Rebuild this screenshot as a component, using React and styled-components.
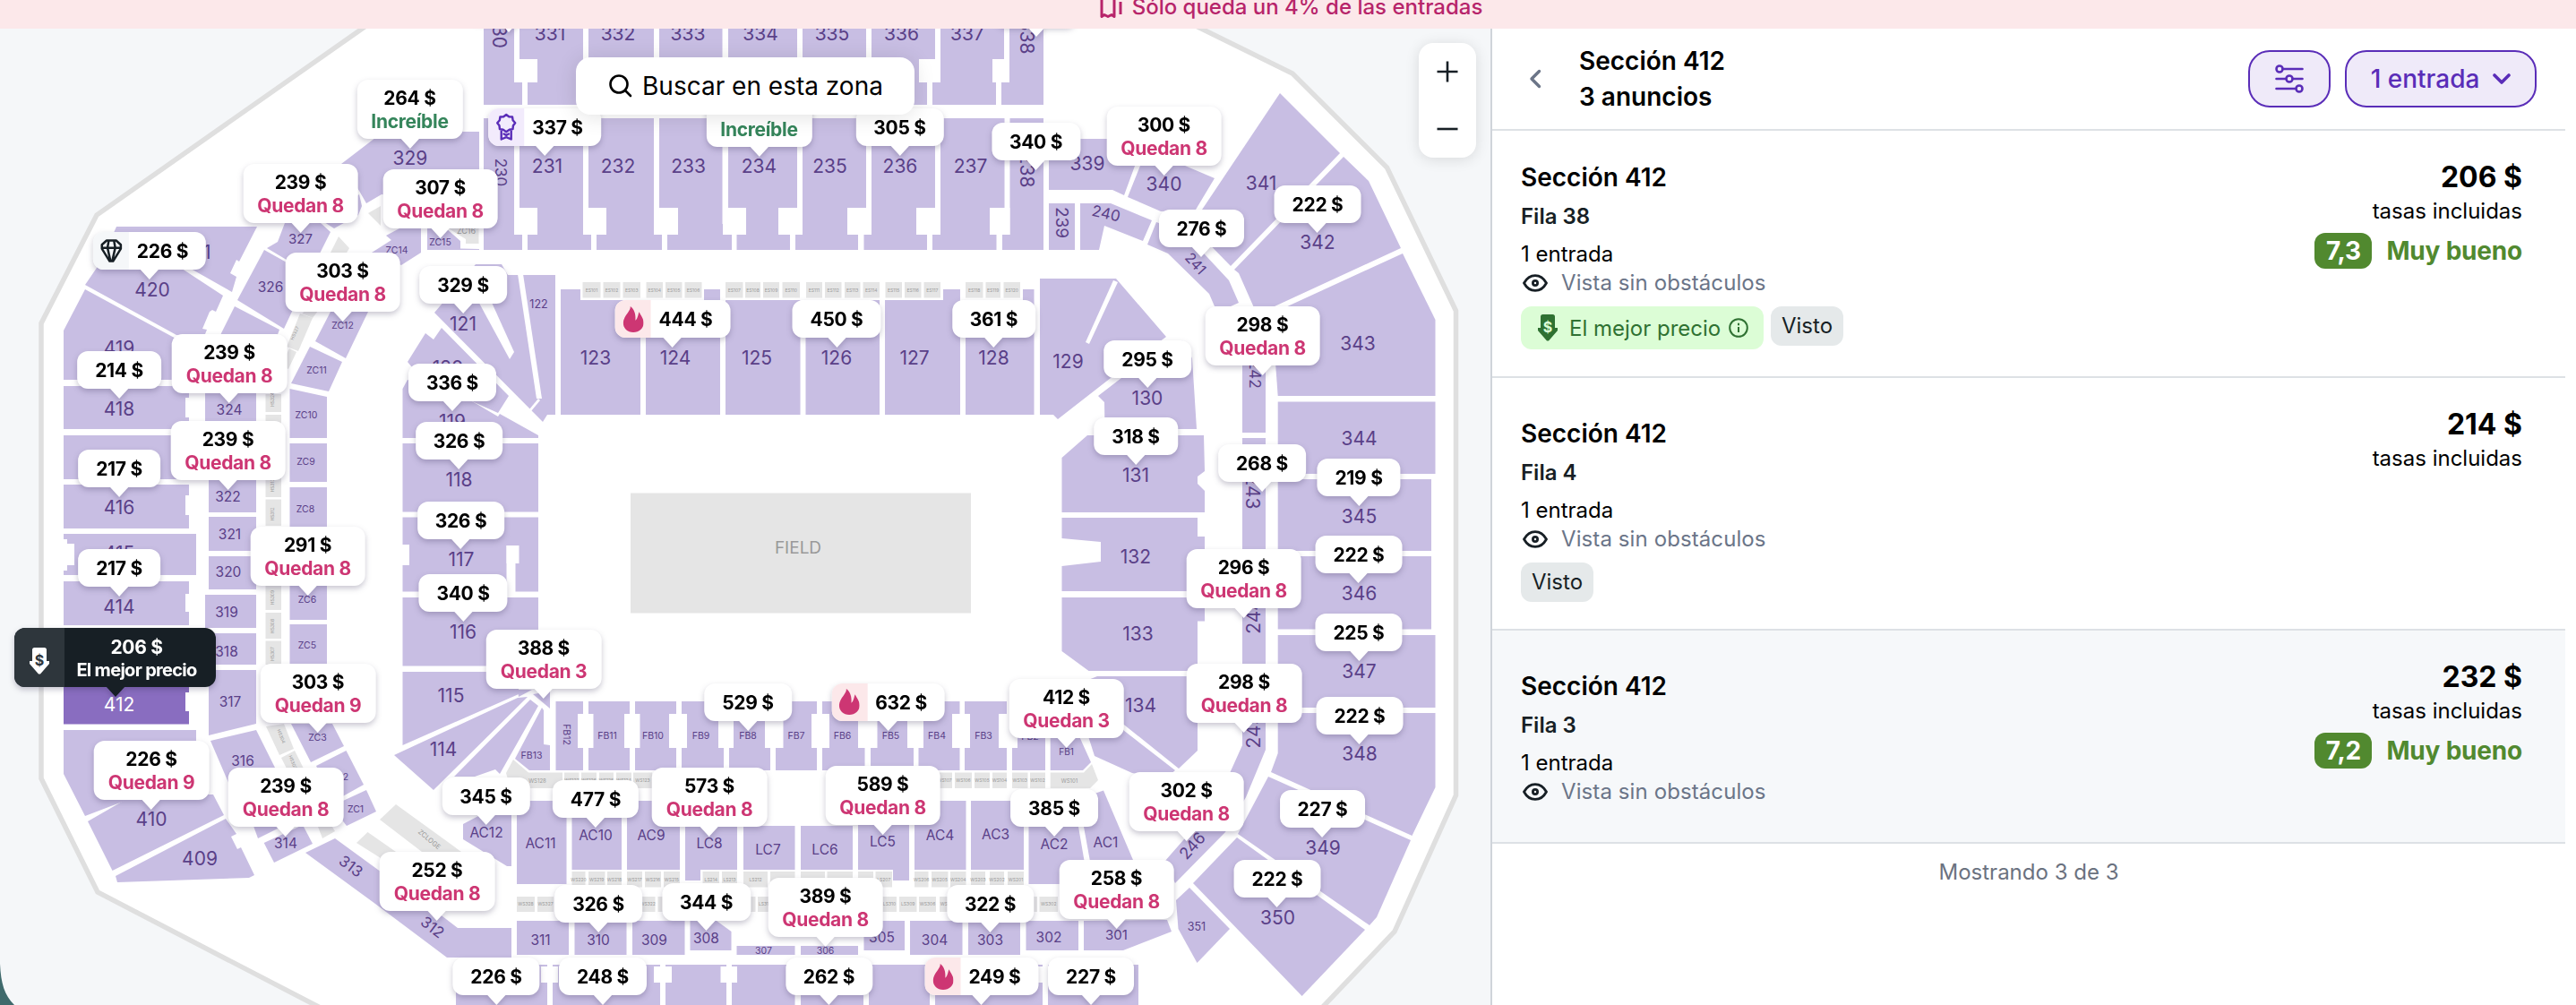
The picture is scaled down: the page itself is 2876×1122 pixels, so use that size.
import React from 'react'
import styled, { createGlobalStyle, css } from 'styled-components'

const colors = {
  section: '#c8bee3',
  selected: '#896dc0',
  label: '#5a4088',
  closed: '#e5e5e5',
  brand: '#5a2db8',
  pink: '#cd3673',
  dark: '#171f25',
  muted: '#6b7588',
}

const GlobalStyle = createGlobalStyle`
  * { box-sizing: border-box; }
  body {
    margin: 0;
    background: #fff;
    color: #000;
    font-family: Inter, "Liberation Sans", sans-serif;
  }
`

const box = (x1, y1, x2, y2) => `${x1},${y1} ${x2},${y1} ${x2},${y2} ${x1},${y2}`

const sections = [
  // 400s
  '130,253 287,253 267,292 264,290 257,305 264,309 259,326 160,270 116,285',
  '108,299 112,290 165,275 249,330 241,348 237,346 234,348 226,367 231,368 229,373 197,374 95,318',
  '95,323 200,380 211,380 211,424 71,424 71,369',
  box(71, 431, 211, 479),
  box(71, 486, 219, 535),
  box(71, 541, 211, 590),
  box(71, 596, 219, 642),
  box(71, 649, 211, 698),
  '71,815 219,815 219,875 150,890 95,911 71,864',
  '98,917 150,887 238,887 250,910 125.5,972',
  '129,978 252,914 264,931 258,934 265,948 269,946 284,977 278,980 131,985',
  // 300s, left side
  '381,183 428,147 535,147 535,230 426,217 409,227 401,213',
  '362,248 373,255 400,240 404,230 401,217 390,225',
  '310,270 318,249 358,249 369,259 356,285 340,302 298,277',
  '295,279 345,307 317,367 265,335',
  '262,342 312,368 288,432 228,420 247,372',
  box(229, 436, 286, 470),
  box(233, 476, 286, 519),
  box(233, 525, 286, 572),
  box(233, 577, 286, 615),
  box(233, 621, 286, 658),
  box(229, 664, 286, 701),
  box(229, 707, 286, 742),
  '233,748 286,748 286,808 233,821',
  '235,827 286,815 307,857 307,890 262,890',
  '275,900 330,900 312,924 288,936',
  '294.7,941 338,921 349,942 306,963',
  '374,936 422,971 494,1023 511,1036 571,1036 571,1069 499,1069 419,1009 341,952',
  // zone club
  '477,255 498,255 514,269 514,277.5 535,278 535,279 477,279',
  '415,282 437,268 431,263 446,255 470,255 470,282 448,296',
  '369,348 411,348 386,400 352,381',
  '346,387 382,404 367,437 325,428',
  '323.5,434 365,443 365,489 323.5,489',
  box(323.5, 495, 365, 538),
  box(323.5, 544, 365, 588),
  box(323.5, 594, 365, 645),
  box(323.5, 651, 365, 692),
  box(323.5, 697, 365, 741.5),
  '325,808 371,808 384,833 347,851',
  '353,855 386.5,838 406,876 372,895',
  '370,900 409,882 420,906 387,922',
  // 100s, left side
  '531,295 560,295 567,307 620,307 620,463 611,463 606,471 485,349',
  '455,404 475,372 484,379 493,366 568,442 556,461 527,448 460,410',
  '449.5,434 455,424 527,448 556,465 558,462 601,486 601,489 449.5,489',
  box(449.5, 495, 601, 571.5),
  box(449.5, 577.5, 601, 660.5),
  box(449.5, 667, 601, 743.5),
  '449.5,750 601,750 579,769 579,775 449.5,832',
  '440,843 578,779 589,778 484,882',
  '592,781 601,788 558,864 553,859 530,867 507,867',
  '607,793 607,831 614,832 614,860 591,860 575,847 605,790',
  '595,775 614,772 614,791',
  '578,770 594,770 579,778',
  // 330s and 230s
  '540,30 574,30 574,92 583,92 583,117 540,117',
  box(580, 30, 651, 92), box(589, 80, 660, 117),
  box(657, 30, 730, 92), box(666, 80, 739, 117),
  box(736, 30, 806.5, 92), box(745, 80, 817, 117),
  box(813, 30, 890, 92), box(822.5, 80, 882, 117),
  box(896, 30, 967, 92), box(888, 80, 958, 117),
  box(973, 30, 1044, 92), box(964.5, 80, 1035, 117),
  box(1050, 30, 1121, 92), box(1041, 80, 1112, 117),
  box(1127, 30, 1165, 92), box(1118, 92, 1165, 117),
  '540,132 574,132 574,262 583,262 583,279 540,279',
  box(580, 132, 651, 262), box(589, 250, 660, 279),
  box(657, 132, 730, 262), box(666, 250, 739, 279),
  box(736, 132, 806.5, 262), box(745, 250, 817, 279),
  box(813, 132, 890, 262), box(822.5, 250, 882, 279),
  box(896, 132, 967, 262), box(888, 250, 958, 279),
  box(973, 132, 1044, 262), box(964.5, 250, 1035, 279),
  box(1050, 132, 1121.5, 262), box(1041, 250, 1112.5, 279),
  box(1127.5, 132, 1165, 262), box(1119, 262, 1165, 279),
  // 120s
  box(626, 323, 715, 463),
  box(721, 323, 804, 463),
  box(810, 323, 893.5, 463),
  box(899.5, 323, 982, 463),
  box(988, 323, 1072, 463),
  box(1078, 323, 1154.5, 463),
  '1161,311 1246,311 1302,376 1240,422 1181,468 1176,463 1161,463',
  '1226,442 1252,422 1320,380 1331,400 1336,479 1233.5,479 1233,449',
  '1214,486 1344,486 1345,526 1337,532 1337,540 1345,548 1345,572 1185.5,572 1185.5,511',
  '1185.5,578 1337,578 1337,599 1345,599 1345,660 1185.5,660 1185.5,632 1229,627 1229,605 1185.5,601',
  '1185.5,667 1345,667 1345,693.5 1337,693.5 1337,749 1215.5,749 1185.5,727',
  '1225,755 1337,755 1337,838 1316,858 1200,765',
  '1200,775 1254,815 1312,860 1300,870 1264,863 1222,844',
  // 340s
  '1171,155 1278,155 1255,218 1242,212 1171,212',
  '1273,185 1323,185 1356,199 1335,234 1296,236 1259,220',
  '1429,104 1496,171 1374,297 1330,252',
  '1500,175 1528,202 1564,277 1423,342 1402,348 1383,305 1378,301',
  '1566,283 1602.5,357 1602.5,442 1426.7,442 1420,350',
  box(1426.7, 448.5, 1602.5, 529),
  box(1426.7, 535, 1598, 615),
  box(1426.7, 621, 1598, 702.5),
  box(1426.7, 709, 1602.5, 790),
  '1426.7,796 1602.5,796 1602.5,879 1576.5,933 1419,862 1426.7,841',
  '1416,867 1575,938 1537,1024 1529,1033 1382,931',
  '1381,935 1524,1038 1453.6,1112 1332,986',
  '1328,991 1373,1037 1336.5,1075 1315.5,1037 1313,1005',
  // ring
  box(1171, 227, 1200, 279),
  '1206,227 1240,227 1286,246 1276,269 1233,252 1227,279 1206,279',
  '1291,248 1320,258 1345,284 1372,313 1383,338 1374,342 1356,342 1350,328 1304,283 1281,273',
  box(1387, 350, 1413, 483),
  '1387,489 1413,489 1413,837 1391,890 1368,929 1312,986 1300,962 1350,905 1373.5,862 1387,832',
  // field boxes
  box(620.5, 783, 651, 860),
  box(657, 783, 703, 860),
  box(709, 783, 755, 860),
  box(761, 783, 808, 860),
  box(814, 783, 860, 860),
  box(866, 783, 912, 860),
  box(918, 783, 965.5, 860),
  box(972, 783, 1020, 860),
  box(1025.5, 783, 1071.5, 860),
  box(1077, 783, 1124, 860),
  box(1130, 783, 1167, 860),
  '1172.7,800 1195,800 1218,851 1209,860 1172.7,860',
  // all inclusive clubs
  '517,920 536,910 571,910 571,967 566,967 517,937',
  box(577, 894, 632.5, 987),
  box(638.5, 894, 694, 971),
  box(700, 894, 759, 971),
  '765,894 823,894 823,971 782,971 782,983 765,983',
  box(830, 922, 887.5, 971),
  box(894, 922, 952, 971),
  '958,894 1015,894 1015,983 997,983 997,971 958,971',
  box(1021, 894, 1078.5, 971),
  box(1084, 894, 1143, 971),
  '1148.5,894 1200,894 1204,923 1215,987 1148.5,987',
  '1205,892 1232,882.5 1282,1000 1224,1000 1210,923',
  // lower 300s
  box(577, 1028, 635, 1066),
  box(641.5, 1028, 699.5, 1066),
  box(706, 1028, 764.5, 1066),
  '770.5,1028 800,1028 816.5,1040 816.5,1061 770.5,1061',
  box(822.5, 1056, 887.5, 1066),
  box(894, 1056, 958, 1066),
  box(964.5, 1028, 1010, 1061),
  box(1016, 1028, 1074.5, 1066),
  box(1081, 1028, 1139, 1066),
  box(1145.5, 1028, 1204, 1061),
  '1210,1028 1303,1027 1308,1040 1254,1061 1210,1061',
  // bottom row
  box(509, 1077, 611, 1130),
  box(617, 1077, 737, 1130),
  box(743, 1077, 811, 1130),
  box(817, 1077, 887.5, 1130),
  box(894, 1077, 964, 1130),
  box(970, 1077, 1038, 1130),
  box(1044, 1077, 1164, 1130),
  box(1170, 1077, 1271, 1130),
]

// stairs and vomitories, painted over the sections
const gaps = [
  box(207, 444, 212, 466), box(207, 553, 212, 575), box(207, 663, 212, 683),
  box(71, 602, 75, 637), box(75, 607, 83, 631),
  '525,320 541,320 574,393 569,401',
  '578,306 584,306 605,445 599,445',
  '601,445 603,447 593,459 591,457',
  box(449, 608, 457, 631), box(565.5, 609, 579.5, 629), box(565.5, 609, 575.5, 661),
  '1243,313 1248,315 1216,384 1212,382',
  box(574, 66, 600, 92), box(1026, 66, 1050, 92), box(1108, 66, 1127, 92),
  box(574, 232, 600, 262), box(651, 232, 677, 262), box(730, 232, 757, 262),
  box(807, 232, 833, 262), box(869, 232, 896, 262), box(946, 232, 973, 262),
  box(1023, 232, 1050, 262), box(1105, 232, 1127.5, 262),
  box(648, 313, 786, 335), box(810, 313, 1053, 335), box(1078, 313, 1142, 335),
  box(645, 797, 662.5, 835), box(697, 797, 714.5, 835), box(747, 797, 767, 835),
  box(802, 797, 819, 835), box(854, 797, 874.5, 835), box(906, 797, 926, 835),
  box(958, 797, 979.5, 835), box(1013, 797, 1031, 835), box(1063, 797, 1083, 835),
  box(1115, 797, 1136, 835),
  box(604, 1079, 623, 1097), box(730, 1079, 750, 1097), box(804.5, 1079, 823, 1097),
  box(1157, 1079, 1176, 1097),
]

const closed = [
  '335,350 349,355 333,392 320,387',
  '323,389 331,393 322,412 314,408',
  '337,350 350,340 355,347 349,355',
  box(296.5, 440, 314, 460), box(296.5, 463, 314, 480), box(296.5, 530, 314, 555),
  box(296.5, 557.5, 314, 587), box(296.5, 653, 314, 681), box(296.5, 684, 314, 713),
  box(296.5, 715.5, 314, 742),
  '297,811 317,808 328,836 312,843',
  '314,846 329,838 339,858 320,858',
  '352,915 366,915 374,928 360,936',
  '411,238 425,230 425,252',
  '378,264 390,277 386,284 368,284',
  '501,255 534.5,255 534.5,272 520,272 520,267',
  '442,898 515,951 471,951 424,915',
  '410.5,929 442,951 425,958 398,941',
  '573,848 590,862.5 628,862.5 628,880 570,880 565,863',
  '1172.7,862.5 1210,862.5 1219,853 1226,871 1217,880 1172.7,880',
]

const boxRow = (y, h, prefix, list) =>
  list.map(([x1, x2, n]) => ({ x: x1, y, w: x2 - x1, h, label: n ? prefix + n : '' }))

const closedBoxes = [
  ...boxRow(315, 17.5, 'ES', [
    [650.5, 670.5, 101], [673.5, 692.5, 102], [695.5, 715, 103], [721.5, 740, 104],
    [743, 761.5, 105], [764.5, 783.5, 106], [810, 829.5, 107], [832, 849, 108],
    [852, 870, 109], [873.5, 893, 110], [900, 918, 111], [921, 939.5, 112],
    [943, 960.5, 113], [963.5, 982, 114], [988.5, 1007, 115], [1010, 1028.5, 116],
    [1031.5, 1050, 117], [1078, 1097.5, 118], [1100.5, 1117, 119], [1120.5, 1139, 120],
  ]),
  ...boxRow(862.5, 17.5, 'WS', [
    [630, 646.5, 127], [649, 666, 126], [669, 685, 125], [688, 705, 124], [707, 728, 123],
    [1046, 1063, 107], [1066, 1085, 106], [1088, 1105, 105], [1108, 1124, 104],
    [1130, 1147.5, 103], [1150, 1167, 102],
  ]),
  ...boxRow(973, 17.5, 'WS', [
    [638.5, 653.5, 220], [657, 675.5, 219], [678, 694, 218], [700, 717, 217],
    [720, 738, 216], [741, 759, 215], [1021, 1036.5, 206], [1040, 1058.5, 205],
    [1061, 1078.5, 204], [1084, 1100, 203], [1105, 1121, 202], [1125, 1143, 201],
  ]),
  ...boxRow(973, 17.5, 'LS', [
    [784.5, 803, 214], [806, 823, 213], [830, 857, 212], [860, 887.5], [894, 921],
    [923.5, 952], [958, 975], [977.5, 996, 207],
  ]),
  ...boxRow(1001, 17, 'WS', [
    [577, 597, 328], [600, 618, 327], [715, 731.5, 322], [734.5, 742], [1026, 1045, 306],
    [1049, 1068, 305], [1154, 1158], [1160.5, 1181, 302],
  ]),
  ...boxRow(1001, 17, 'LS', [[838, 843.5], [846, 862, 313], [985, 1001, 310], [1004, 1023.5, 309]]),
]

// [text, x, y, font size, rotation]
const labels = [
  ['421', 218, 281, 21], ['420', 170, 323, 21], ['419', 133, 388, 21], ['418', 133, 456, 21],
  ['416', 133, 566, 21], ['415', 133, 617, 21], ['414', 133, 677, 21],
  ['410', 169, 914, 21], ['409', 223, 958, 21],
  ['329', 458, 176, 21], ['327', 335.5, 267, 15], ['326', 302, 320, 15.5],
  ['324', 256, 457, 15.5], ['322', 254.5, 554, 15.5], ['321', 256.5, 596, 15.5],
  ['320', 255, 638, 15.5], ['319', 253, 683, 15.5], ['318', 253, 727, 15.5],
  ['317', 257, 783, 15.5], ['316', 271, 849, 15.5], ['314', 319, 941, 15.5],
  ['313', 392, 967, 17, 37], ['312', 483, 1035, 17, 37],
  ['ZC15', 491.5, 270, 10.5], ['ZC14', 443, 279, 10.5], ['ZC12', 382.5, 363.5, 10.5],
  ['ZC11', 353.5, 413.5, 10.5], ['ZC10', 342, 463, 10.5], ['ZC9', 341.5, 515, 10.5],
  ['ZC8', 341, 568, 10.5], ['ZC6', 343, 669, 10.5], ['ZC5', 343, 720, 10.5],
  ['ZC3', 354.5, 823, 10.5], ['ZC2', 379, 867, 10.5], ['ZC1', 397, 903, 10.5],
  ['122', 601.5, 339, 12.5], ['121', 517, 361, 21], ['120', 500, 410, 21], ['119', 505, 470, 21],
  ['118', 512.5, 535, 21], ['117', 515, 624, 21], ['116', 517, 705, 21],
  ['115', 503.5, 776, 21], ['114', 495, 836, 21],
  ['330', 558, 34.5, 21, 90], ['331', 614, 37, 21], ['332', 690, 37, 21], ['333', 768, 37, 21],
  ['334', 849, 37, 21], ['335', 929, 37, 21], ['336', 1006.5, 37, 21], ['337', 1080, 37, 21],
  ['338', 1147, 41, 21, 90],
  ['230', 559, 192.5, 17, 90], ['231', 611, 185, 21], ['232', 690, 185, 21],
  ['233', 768.5, 185, 21], ['234', 847.5, 185, 21], ['235', 926.5, 185, 21],
  ['236', 1005, 185, 21], ['237', 1083.5, 185, 21], ['238', 1147, 190, 21, 90],
  ['123', 665, 399, 21], ['124', 754, 399, 21], ['125', 845, 399, 21], ['126', 934, 399, 21],
  ['127', 1021, 399, 21], ['128', 1109.5, 399, 21], ['129', 1192.5, 403, 21],
  ['130', 1281, 444, 21], ['131', 1268, 530, 21], ['132', 1268, 621, 21],
  ['133', 1270.5, 707, 21], ['134', 1273.5, 787, 21],
  ['339', 1214, 182, 21], ['340', 1299.5, 205, 21], ['341', 1408, 204, 21],
  ['342', 1471, 270, 21], ['343', 1516, 383.5, 21], ['344', 1517.5, 489, 21],
  ['345', 1517.5, 576, 21], ['346', 1517.5, 662, 21], ['347', 1517.5, 749, 21],
  ['348', 1518, 841, 21], ['349', 1477, 946, 21], ['350', 1426.5, 1024, 21],
  ['351', 1336, 1034, 12.5],
  ['239', 1186, 248.5, 19, 90], ['240', 1235, 238, 17, 13], ['241', 1335, 294, 16, 48],
  ['242', 1401.5, 418, 17, 90], ['243', 1399, 549, 21, 90], ['244', 1399, 688, 21, -90],
  ['245', 1399.5, 816, 21, -90], ['246', 1331, 944, 18, -48],
  ['FB13', 593.5, 843, 10.5], ['FB12', 632.5, 820, 10.5, 90], ['FB11', 678, 821, 10.5],
  ['FB10', 729, 821, 10.5], ['FB9', 782.5, 821, 10.5], ['FB8', 835, 821, 10.5],
  ['FB7', 889, 821, 10.5], ['FB6', 940.5, 821, 10.5], ['FB5', 994.5, 821, 10.5],
  ['FB4', 1046, 821.5, 10.5], ['FB3', 1098, 821, 10.5], ['FB2', 1150, 822, 10.5],
  ['FB1', 1190.5, 839, 10],
  ['AC12', 543, 929, 15.5], ['AC11', 603.5, 941, 15.5], ['AC10', 665, 932, 15.5],
  ['AC9', 727, 932, 15.5], ['LC8', 792, 941, 15.5], ['LC7', 857.5, 948, 15.5],
  ['LC6', 921, 948, 15.5], ['LC5', 985.5, 939, 15.5], ['AC4', 1049.5, 932, 15.5],
  ['AC3', 1111.5, 931, 15.5], ['AC2', 1177, 942, 15.5], ['AC1', 1234.5, 940, 15.5],
  ['311', 603.5, 1049, 15.5], ['310', 668, 1049, 15.5], ['309', 730.5, 1049, 15.5],
  ['308', 788.5, 1047, 15.5], ['307', 852.5, 1061, 10.5], ['306', 921.5, 1061, 10.5],
  ['305', 984.5, 1046, 15.5], ['304', 1043.5, 1049, 15.5], ['303', 1105.5, 1049, 15.5],
  ['302', 1171, 1046, 15.5], ['301', 1246.5, 1044, 15],
]

const closedLabels = [
  ['ZC16', 520.5, 257.5, 9], ['ZCLOGE', 479.5, 937, 7.5, 40], ['WS128', 600, 872, 6],
  ['WS101', 1194, 872, 6], ['HS327', 329, 372, 5, -66], ['HS324', 304.5, 446, 5, -90],
  ['HS313', 304.5, 542, 5, -90], ['HS312', 304.5, 574, 5, -90], ['HS309', 304.5, 667, 5, -90],
  ['HS308', 304.5, 699, 5, -90], ['HS307', 304.5, 730, 5, -90], ['HS304', 314, 822, 5, 68],
  ['HS303', 327, 851, 5, 68],
]

// x is the tip of the pin, y the lower edge of its body
const pins = [
  { x: 568, y: 25 },
  { x: 1157, y: 30 },
  { x: 457.5, y: 155, price: 264, deal: true },
  { x: 335.5, y: 249, price: 239, left: 8 },
  { x: 491.5, y: 255, price: 307, left: 8 },
  { x: 382.5, y: 348, price: 303, left: 8 },
  { x: 167, y: 301, price: 226, icon: 'gem' },
  { x: 517, y: 339, price: 329 },
  { x: 608, y: 163, price: 337, icon: 'award' },
  { x: 847.5, y: 164, price: 267, deal: true },
  { x: 1004.5, y: 163, price: 305 },
  { x: 1156.5, y: 179, price: 340 },
  { x: 1299.5, y: 185, price: 300, left: 8 },
  { x: 1341.5, y: 276, price: 276 },
  { x: 1471, y: 249, price: 222 },
  { x: 1409.5, y: 408, price: 298, left: 8 },
  { x: 1281, y: 422, price: 295 },
  { x: 1268, y: 508, price: 318 },
  { x: 1409, y: 538, price: 268 },
  { x: 1517, y: 554, price: 219 },
  { x: 1388.5, y: 679, price: 296, left: 8 },
  { x: 1517, y: 640, price: 222 },
  { x: 1517, y: 727, price: 225 },
  { x: 1389, y: 807, price: 298, left: 8 },
  { x: 1518, y: 820, price: 222 },
  { x: 1476.5, y: 924, price: 227 },
  { x: 1426, y: 1002, price: 222 },
  { x: 1324.5, y: 928, price: 302, left: 8 },
  { x: 751, y: 377, price: 444, icon: 'flame' },
  { x: 934, y: 377, price: 450 },
  { x: 1109.5, y: 377, price: 361 },
  { x: 505, y: 448, price: 336 },
  { x: 512.5, y: 513, price: 326 },
  { x: 514.5, y: 602, price: 326 },
  { x: 517, y: 683, price: 340 },
  { x: 133, y: 434, price: 214 },
  { x: 133, y: 544, price: 217 },
  { x: 133, y: 655, price: 217 },
  { x: 256, y: 438.5, price: 239, left: 8 },
  { x: 254.5, y: 535.5, price: 239, left: 8 },
  { x: 343.5, y: 654, price: 291, left: 8 },
  { x: 355, y: 807, price: 303, left: 9 },
  { x: 169, y: 893, price: 226, left: 9 },
  { x: 319, y: 923, price: 239, left: 8 },
  { x: 607, y: 769, price: 388, left: 3 },
  { x: 835, y: 804.5, price: 529 },
  { x: 991.5, y: 804.5, price: 632, icon: 'flame' },
  { x: 1190.5, y: 823.5, price: 412, left: 3 },
  { x: 542.5, y: 909.5, price: 345 },
  { x: 665, y: 912.5, price: 477 },
  { x: 792, y: 922.5, price: 573, left: 8 },
  { x: 985.5, y: 920.5, price: 589, left: 8 },
  { x: 1177, y: 922.5, price: 385 },
  { x: 488, y: 1017, price: 252, left: 8 },
  { x: 668, y: 1030, price: 326 },
  { x: 788.5, y: 1027.5, price: 344 },
  { x: 921.5, y: 1045.5, price: 389, left: 8 },
  { x: 1105.5, y: 1030, price: 322 },
  { x: 1246.5, y: 1026, price: 258, left: 8 },
  { x: 554, y: 1111, price: 226 },
  { x: 673, y: 1111, price: 248 },
  { x: 925.5, y: 1111, price: 262 },
  { x: 1096, y: 1111, price: 249, icon: 'flame' },
  { x: 1218, y: 1111, price: 227 },
]

const listings = [
  { id: 1, row: 'Fila 38', price: '206 $', score: '7,3', best: true, seen: true },
  { id: 2, row: 'Fila 4', price: '214 $', seen: true },
  { id: 3, row: 'Fila 3', price: '232 $', score: '7,2', active: true },
]

const Flame = () => (
  <svg width="23" height="29" viewBox="0 0 23 29" fill={colors.pink}>
    <path d="M8.2 0C9 5 1 10 0.200 18 0 24.500 5 29 11.500 29S23 24.500 23 18.500C23 13 19.500 10 18 6.300 16.800 8.500 17 13 13.800 15.800 14.500 9 12.500 3 8.200 0z" />
  </svg>
)

const Award = () => (
  <svg width="24" height="32" viewBox="0 0 24 32" fill="none" stroke={colors.brand} strokeWidth="2.4" strokeLinejoin="round">
    <path d="M12 2l3 2.3 3.8.2.6 3.8 2.6 3-2.3 3-.4 3.8-3.8.7L12 21.200l-3.500-2.400-3.800-.7-.4-3.800-2.300-3 2.600-3 .6-3.800L9 4.300z" />
    <path d="M6.500 19.500V29.500l5.500-2.300 5.500 2.300V19.500M8.500 23l3.500 2 3.500-2" />
  </svg>
)

const Gem = () => (
  <svg width="25" height="28" viewBox="0 0 26 28" fill="none" stroke={colors.dark} strokeWidth="2.6" strokeLinejoin="round">
    <path d="M7.500 2h11L24 7v4.500L15 26h-4L2 11.500V7z M2 10.500h22 M10 2L8.500 10.500 12 26 M16 2l1.500 8.500L14 26" />
  </svg>
)

const PriceDown = ({ ink, paper }) => (
  <svg width="22" height="30" viewBox="0 0 22 30">
    <path d="M5.500 0h11Q19 0 19 2.500V15h3v3L12 29.500h-2L0 18v-3h3V2.500Q3 0 5.500 0z" fill={ink} />
    <text x="11" y="19.500" textAnchor="middle" fontSize="16" fontWeight="700" fill={paper}>$</text>
  </svg>
)

const Eye = () => (
  <svg width="28" height="20" viewBox="0 0 28 20" fill="none" stroke={colors.dark} strokeWidth="2.8">
    <path d="M1.500 10C4.500 4.500 9 1.600 14 1.600S23.500 4.500 26.500 10C23.500 15.500 19 18.400 14 18.400S4.500 15.500 1.500 10z" strokeLinejoin="round" />
    <circle cx="14" cy="10" r="2.6" />
  </svg>
)

const pinIcons = {
  flame: { Icon: Flame, bg: '#fce8ea' },
  award: { Icon: Award, bg: '#f2ebfc' },
  gem: { Icon: Gem, bg: '#f5f7f9' },
}

const SeatLabel = ({ item: [text, x, y, size, rotate = 0], fill }) => (
  <text
    x={x}
    y={y + size * 0.364}
    fontSize={size}
    fill={fill}
    textAnchor="middle"
    transform={rotate ? `rotate(${rotate} ${x} ${y})` : undefined}
  >
    {text}
  </text>
)

const StadiumMap = () => (
  <Stadium viewBox="0 32 1664 1090">
    <polygon
      points="457,-5 108,240 46,361 46,869 109,996 400,1147 1455,1147 1557,1040 1625.5,888 1625.5,347 1548.5,187 1443,82 1266,-5"
      fill="#fff"
      stroke="#dfdfdf"
      strokeWidth="5.5"
    />
    <g fill={colors.section}>
      {sections.map(points => <polygon key={points} points={points} />)}
    </g>
    <polygon points={box(71, 704, 211, 808.5)} fill={colors.selected} />
    <g fill="#fff">
      {gaps.map(points => <polygon key={points} points={points} />)}
      <rect x="207" y="773" width="5" height="21" />
    </g>
    <g fill={colors.closed}>
      {closed.map(points => <polygon key={points} points={points} />)}
      {closedBoxes.map(b => (
        <rect key={`${b.x}-${b.y}`} x={b.x} y={b.y} width={b.w} height={b.h} />
      ))}
      <rect x="704" y="550.5" width="380" height="134" />
    </g>
    {closedBoxes.filter(b => b.label).map(b => (
      <SeatLabel
        key={`${b.label}-${b.x}`}
        item={[b.label, b.x + b.w / 2, b.y + b.h / 2, 5]}
        fill="#999"
      />
    ))}
    {closedLabels.map(item => <SeatLabel key={item[0]} item={item} fill="#999" />)}
    {labels.map(item => <SeatLabel key={item[0]} item={item} fill={colors.label} />)}
    <SeatLabel item={['412', 133, 786, 21]} fill="#fff" />
    <SeatLabel item={['FIELD', 891, 611, 19]} fill="#999" />
  </Stadium>
)

const PricePin = ({ pin }) => {
  const { Icon, bg } = pinIcons[pin.icon] || {}
  const note = pin.deal ? 'Increíble' : pin.left && `Quedan ${pin.left}`
  return (
    <Pin style={{ left: pin.x, top: pin.y - 32 }}>
      <PinBody>
        {Icon && <PinIcon $bg={bg}><Icon /></PinIcon>}
        <PinText $withIcon={!!Icon} $double={!!note}>
          {pin.price && <PinPrice>{pin.price} $</PinPrice>}
          {note && <PinNote $deal={pin.deal}>{note}</PinNote>}
        </PinText>
      </PinBody>
      <PinTail />
    </Pin>
  )
}

const Listing = ({ item }) => (
  <Row $active={item.active} $best={item.best}>
    <Details $best={item.best}>
      <RowTitle>Sección 412</RowTitle>
      <RowName>{item.row}</RowName>
      <Quantity>1 entrada</Quantity>
      <View><Eye /> Vista sin obstáculos</View>
      {item.seen && (
        <Tags>
          {item.best && (
            <BestTag>
              <PriceDown ink="#2f7132" paper="#dcfdd6" />
              <span>El mejor precio</span>
              <svg width="22" height="22" viewBox="0 0 22 22" fill="none" stroke="#2f7132" strokeWidth="2">
                <circle cx="11" cy="11" r="9.8" />
                <path d="M11 10v6M11 5.800v2.400" />
              </svg>
            </BestTag>
          )}
          <SeenTag>Visto</SeenTag>
        </Tags>
      )}
    </Details>
    <PriceColumn>
      <Price>{item.price}</Price>
      <Fees>tasas incluidas</Fees>
      {item.score && (
        <Rating>
          <Score>{item.score}</Score>
          Muy bueno
        </Rating>
      )}
    </PriceColumn>
  </Row>
)

const App = () => (
  <Page>
    <GlobalStyle />
    <Banner>
      <svg width="25" height="27" viewBox="0 0 25 27" fill="none" stroke="#b7246a" strokeWidth="3">
        <path d="M2 1h3.500q3 4 6 0H16v24.500l-3-2-4 2-4-2-3 2z" strokeLinejoin="round" />
        <path d="M23 9v14" />
      </svg>
      Sólo queda un 4% de las entradas
    </Banner>
    <Content>
      <MapArea>
        <StadiumMap />
        {pins.map(pin => <PricePin key={`${pin.x}-${pin.y}`} pin={pin} />)}
        <BestPin>
          <BestBody>
            <BestIcon><PriceDown ink="#fff" paper="#2e363c" /></BestIcon>
            <BestText>
              <PinPrice>206 $</PinPrice>
              <BestNote>El mejor precio</BestNote>
            </BestText>
          </BestBody>
          <PinTail $dark />
        </BestPin>
        <SearchButton>
          <svg width="26" height="26" viewBox="0 0 26 26" fill="none" stroke="#000" strokeWidth="2.6" strokeLinecap="round">
            <circle cx="11" cy="11" r="9.5" />
            <path d="M18 18l6 6" />
          </svg>
          Buscar en esta zona
        </SearchButton>
        <ZoomControl>
          <ZoomButton>
            <svg width="24" height="24" viewBox="0 0 24 24" stroke={colors.dark} strokeWidth="2.6">
              <path d="M0.500 12h23M12 0.500v23" />
            </svg>
          </ZoomButton>
          <ZoomButton>
            <svg width="24" height="24" viewBox="0 0 24 24" stroke={colors.dark} strokeWidth="2.6">
              <path d="M0.500 12h23" />
            </svg>
          </ZoomButton>
        </ZoomControl>
        <WindowCorner viewBox="0 0 16 46">
          <path d="M0 0C1 22 5 35 16 46H0z" fill="#3f6a6c" />
        </WindowCorner>
      </MapArea>
      <Panel>
        <Header>
          <svg width="14" height="22" viewBox="0 0 14 22" fill="none" stroke={colors.muted} strokeWidth="3.4" strokeLinecap="round" strokeLinejoin="round">
            <path d="M11.500 2.500L3 11l8.500 8.500" />
          </svg>
          <HeaderTitle>
            <div>Sección 412</div>
            <div>3 anuncios</div>
          </HeaderTitle>
          <FilterButton>
            <svg width="32" height="32" viewBox="0 0 32 32" fill="none" stroke={colors.brand} strokeWidth="2.6" strokeLinecap="round">
              <circle cx="5" cy="5" r="3.5" />
              <path d="M9 5h21.500M1.500 16h10.500M20 16h10.500M1.500 27H23" />
              <circle cx="16" cy="16" r="3.5" />
              <circle cx="27" cy="27" r="3.5" />
            </svg>
          </FilterButton>
          <AmountButton>
            1 entrada
            <svg width="20" height="13" viewBox="0 0 20 13" fill="none" stroke={colors.brand} strokeWidth="3.6" strokeLinecap="round" strokeLinejoin="round">
              <path d="M2 2l8 8 8-8" />
            </svg>
          </AmountButton>
        </Header>
        {listings.map(item => <Listing key={item.id} item={item} />)}
        <Summary>Mostrando 3 de 3</Summary>
      </Panel>
    </Content>
  </Page>
)

const Page = styled.div`
  display: flex;
  flex-direction: column;
  width: 2876px;
  height: 1122px;
  overflow: hidden;
`
const Banner = styled.div`
  display: flex;
  align-items: flex-end;
  justify-content: center;
  gap: 11px;
  height: 32px;
  padding: 0 0 11px 7px;
  background: #fce8ea;
  color: #b7246a;
  font-size: 24px;
  font-weight: 500;
  line-height: 27px;
  white-space: nowrap;
  overflow: hidden;

  svg {
    margin-bottom: 1px;
  }
`
const Content = styled.div`
  display: flex;
  flex: 1;
  min-height: 0;
`
const MapArea = styled.div`
  position: relative;
  width: 1664px;
  overflow: hidden;
  background: #f5f7f9;
`
const Stadium = styled.svg`
  display: block;
  width: 1664px;
  height: 1090px;
`
const Pin = styled.div`
  position: absolute;
  transform: translate(-50%, -100%);
  filter: drop-shadow(0 3px 3px rgba(40, 30, 70, 0.25));
`
const PinBody = styled.div`
  display: flex;
  min-width: 90px;
  min-height: 42px;
  border-radius: 12px;
  background: #fff;
  overflow: hidden;
`
const PinIcon = styled.div`
  display: flex;
  align-items: center;
  justify-content: center;
  width: 40px;
  background: ${({ $bg }) => $bg};
`
const PinText = styled.div`
  padding: ${({ $double }) => ($double ? '8px 16px 6px' : '9px 20px 7px')};
  ${({ $withIcon }) => $withIcon && css`
    padding-left: 9px;
  `}
  text-align: center;
  white-space: nowrap;
`
const PinPrice = styled.div`
  font-size: 21px;
  font-weight: 700;
  line-height: 26px;
  letter-spacing: -0.3px;
`
const PinNote = styled.div`
  color: ${({ $deal }) => ($deal ? '#35855b' : colors.pink)};
  font-size: 21px;
  font-weight: 700;
  line-height: 26px;
  letter-spacing: -0.3px;
`
const PinTail = styled.div`
  position: absolute;
  top: calc(100% - 1px);
  left: 50%;
  margin-left: -11px;
  border: 11px solid transparent;
  border-top: 12px solid ${({ $dark }) => ($dark ? colors.dark : '#fff')};
  border-bottom: 0;
`
const BestPin = styled.div`
  position: absolute;
  left: 16px;
  top: 669px;
  filter: drop-shadow(0 3px 3px rgba(40, 30, 70, 0.25));
`
const BestBody = styled.div`
  display: flex;
  width: 225px;
  height: 66px;
  border-radius: 12px;
  background: ${colors.dark};
  color: #fff;
  overflow: hidden;
`
const BestIcon = styled.div`
  display: flex;
  align-items: center;
  justify-content: center;
  width: 56px;
  padding-top: 8px;
  background: #2e363c;
`
const BestText = styled.div`
  flex: 1;
  padding: 9px 8px 0 0;
  text-align: center;
  white-space: nowrap;
`
const BestNote = styled.div`
  font-size: 20px;
  font-weight: 700;
  line-height: 25px;
  letter-spacing: -0.7px;
`
const SearchButton = styled.div`
  position: absolute;
  top: 32px;
  left: 643px;
  display: flex;
  align-items: center;
  gap: 11px;
  width: 378px;
  height: 64px;
  padding-left: 37px;
  border-radius: 16px;
  background: #fff;
  box-shadow: 0 2px 24px rgba(0, 0, 0, 0.12);
  font-size: 28px;
  white-space: nowrap;
`
const ZoomControl = styled.div`
  position: absolute;
  top: 16px;
  right: 16px;
  width: 64px;
  border-radius: 16px;
  background: #fff;
  box-shadow: 0 2px 16px rgba(0, 0, 0, 0.12);
`
const ZoomButton = styled.div`
  display: flex;
  align-items: center;
  justify-content: center;
  height: 64px;
`
const WindowCorner = styled.svg`
  position: absolute;
  left: 0;
  bottom: 0;
  width: 16px;
  height: 46px;
`
const Panel = styled.div`
  flex: 1;
  padding-right: 12px;
  border-left: 2px solid #cfd4da;
`
const Header = styled.div`
  display: flex;
  align-items: center;
  height: 114px;
  padding: 0 32px 0 41px;
  border-bottom: 2px solid #dde1e5;
`
const HeaderTitle = styled.div`
  flex: 1;
  margin-left: 42px;
  font-size: 28px;
  font-weight: 600;
  line-height: 40px;
`
const Outlined = css`
  display: flex;
  align-items: center;
  justify-content: center;
  height: 64px;
  border: 2px solid ${colors.brand};
  border-radius: 24px;
  background: #efeaf9;
  color: ${colors.brand};
`
const FilterButton = styled.div`
  ${Outlined}
  width: 92px;
`
const AmountButton = styled.div`
  ${Outlined}
  gap: 15px;
  width: 214px;
  margin-left: 16px;
  font-size: 28px;
  font-weight: 500;
`
const Row = styled.div`
  display: flex;
  justify-content: space-between;
  height: ${({ $active, $best }) => ($active ? 238 : $best ? 276 : 282)}px;
  padding: 32px 48px 0 32px;
  border-bottom: 2px solid #dde1e5;
  background: ${({ $active }) => ($active ? '#f6f8fa' : '#fff')};
`
const Details = styled.div`
  padding-top: ${({ $best }) => ($best ? 0 : 10)}px;
`
const RowTitle = styled.div`
  font-size: 28px;
  font-weight: 600;
  line-height: 40px;
`
const RowName = styled.div`
  margin-top: 8px;
  color: ${colors.dark};
  font-size: 24px;
  font-weight: 600;
  line-height: 32px;
`
const Quantity = styled.div`
  margin-top: 10px;
  font-size: 24px;
  line-height: 32px;
`
const View = styled.div`
  display: flex;
  align-items: center;
  gap: 15px;
  padding-left: 2px;
  color: ${colors.muted};
  font-size: 24px;
  line-height: 32px;
  letter-spacing: 0.1px;
`
const Tags = styled.div`
  display: flex;
  gap: 8px;
  margin-top: 10px;
`
const BestTag = styled.div`
  display: flex;
  align-items: center;
  width: 271px;
  height: 48px;
  padding-left: 19px;
  border-radius: 12px;
  background: #dcfdd6;
  color: #2f7132;
  font-size: 24px;
  white-space: nowrap;

  span {
    margin: 0 9px 0 13px;
  }
`
const SeenTag = styled.div`
  height: 44px;
  padding: 0 12px;
  border-radius: 12px;
  background: #e5e9ea;
  color: ${colors.dark};
  font-size: 24px;
  line-height: 43px;
`
const PriceColumn = styled.div`
  display: flex;
  flex-direction: column;
  align-items: flex-end;
`
const Price = styled.div`
  font-size: 32px;
  font-weight: 700;
  line-height: 40px;
`
const Fees = styled.div`
  margin-top: 2px;
  font-size: 24px;
  line-height: 32px;
`
const Rating = styled.div`
  display: flex;
  align-items: center;
  gap: 16px;
  margin-top: 8px;
  color: #51892f;
  font-size: 28px;
  font-weight: 700;
  letter-spacing: -0.2px;
`
const Score = styled.div`
  width: 64px;
  height: 40px;
  border-radius: 12px;
  background: #51892f;
  color: #fff;
  line-height: 40px;
  text-align: center;
`
const Summary = styled.div`
  padding-top: 16px;
  color: #6b7280;
  font-size: 24px;
  line-height: 32px;
  text-align: center;
`

export default App
